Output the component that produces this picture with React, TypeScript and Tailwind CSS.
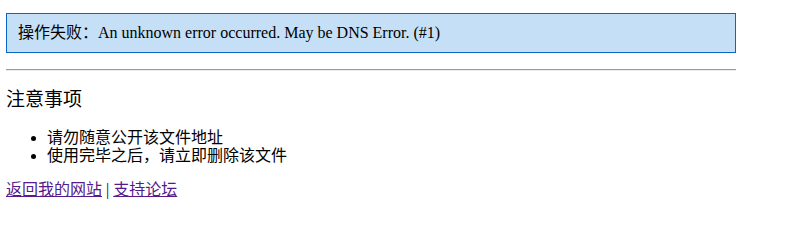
import React from 'react';

const font = "font-['Liberation_Serif','Noto_Sans_CJK_SC',serif]";

// Error page: message box, rule, notes list and footer links
const App: React.FC = () => {
  return (
    <div className={`w-[805px] h-[248px] bg-white text-black ${font}`}>
      <div className="pt-[13px] px-[6px] w-[742px]">
        {/* error message box */}
        <div className="flex items-center h-[40px] border border-[#0a66c8] bg-[#c5dff6] px-[11px] text-[16px] leading-[18px]">
          操作失败：An unknown error occurred. May be DNS Error. (#1)
        </div>

        <hr className="mt-[16px] border-t border-b border-t-[#9a9a9a] border-b-[#ececec]" />

        <h3 className="mt-[17px] text-[19px] leading-[24px]">注意事项</h3>

        <ul className="mt-[17px] pl-[41px] list-disc text-[16px] leading-[18px]">
          <li>请勿随意公开该文件地址</li>
          <li>使用完毕之后，请立即删除该文件</li>
        </ul>

        <p className="mt-[16px] text-[16px] leading-[18px]">
          <a href="#" className="text-[#551a8b] underline">返回我的网站</a>
          {' | '}
          <a href="#" className="text-[#551a8b] underline">支持论坛</a>
        </p>
      </div>
    </div>
  );
};

export default App;
